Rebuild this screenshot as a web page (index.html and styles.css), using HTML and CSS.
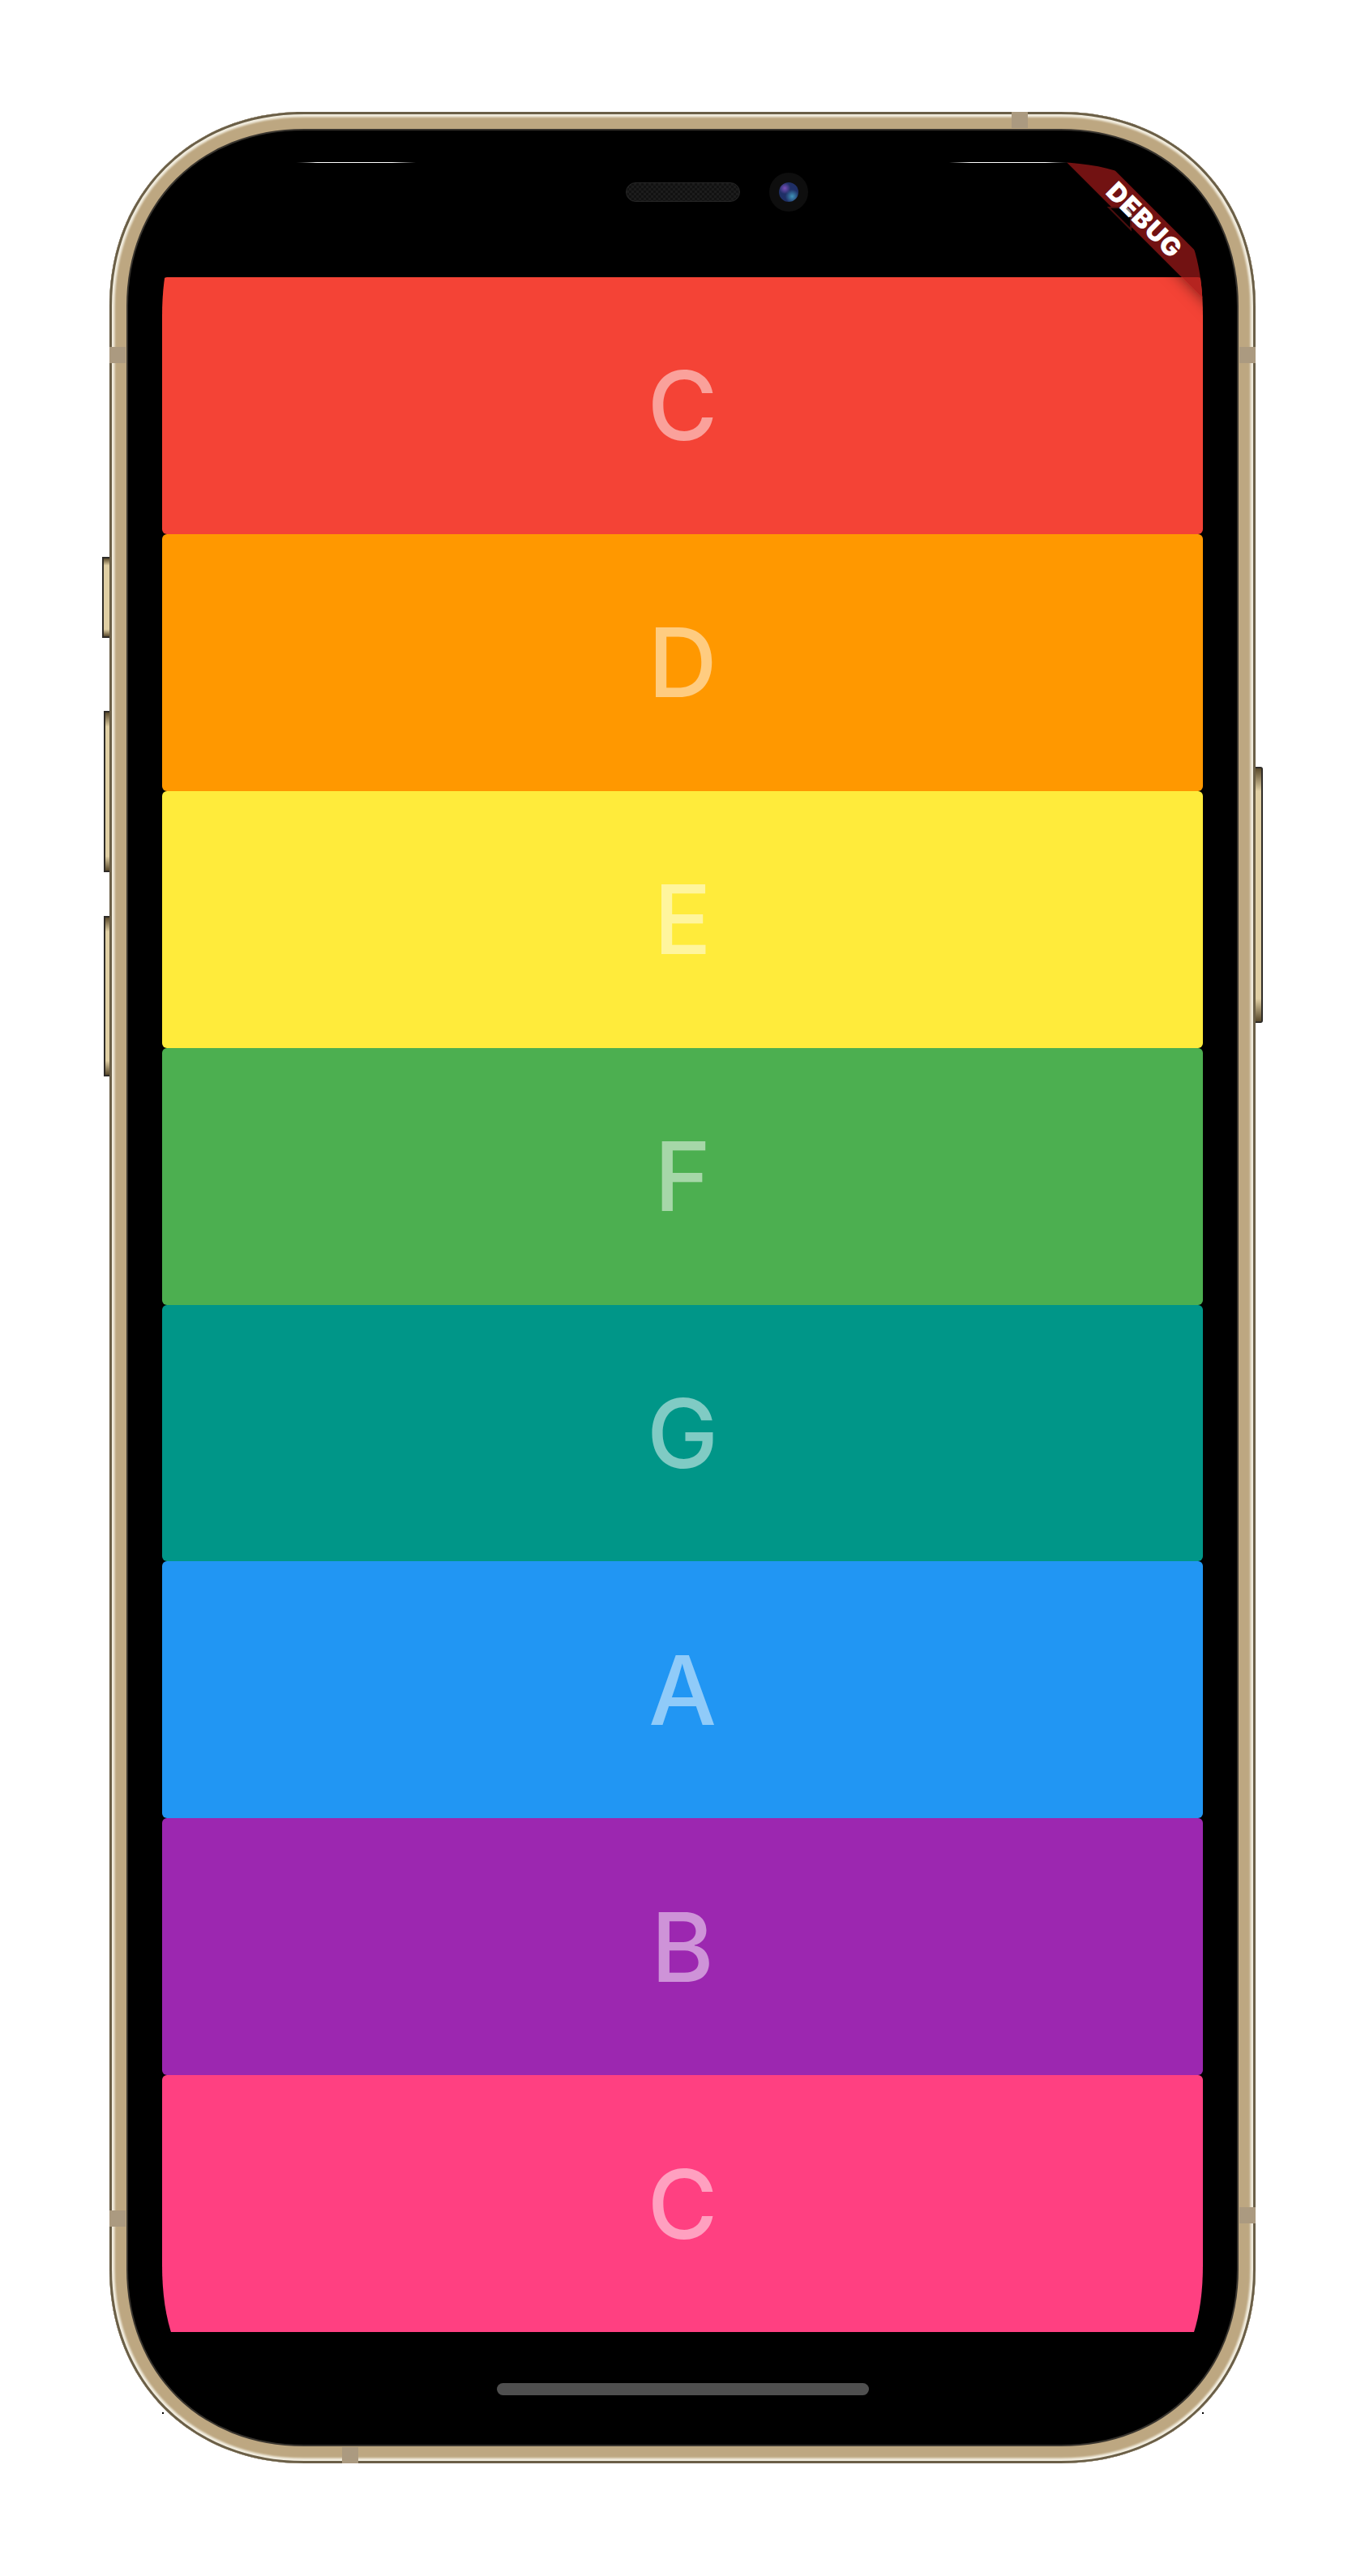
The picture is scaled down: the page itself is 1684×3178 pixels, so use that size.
FILE: index.html
```html
<!DOCTYPE html>
<html>
<head>
<meta charset="utf-8">
<title>Reorderable list</title>
<link rel="stylesheet" href="styles.css">
</head>
<body>
<div class="phone">
	<!-- body: same outline stroked several times, clipped to itself -->
	<svg class="shell" width="1414" height="2901" viewBox="0 0 1414 2901">
		<defs>
			<path id="outline" d="M240 0H1174C1314 0 1414 100 1414 240V2661C1414 2801 1314 2901 1174 2901H240C100 2901 0 2801 0 2661V240C0 100 100 0 240 0Z"/>
			<clipPath id="inside"><use href="#outline"/></clipPath>
			<filter id="soft"><feGaussianBlur stdDeviation="1"/></filter>
		</defs>
		<g clip-path="url(#inside)" fill="none">
			<use href="#outline" fill="#000"/>
			<use href="#outline" stroke="#38342e" stroke-width="46"/>
			<use href="#outline" stroke="#bda781" stroke-width="42"/>
			<use href="#outline" stroke="#f1ecde" stroke-width="13" filter="url(#soft)"/>
			<use href="#outline" stroke="#6b5f47" stroke-width="6"/>
		</g>
		<rect x="65" y="2838" width="2" height="2"/>
		<rect x="1348" y="2838" width="2" height="2"/>
	</svg>
	<!-- side buttons -->
	<div class="btn btn-mute"></div>
	<div class="btn btn-up"></div>
	<div class="btn btn-down"></div>
	<div class="btn btn-power"></div>
	<!-- antenna bands -->
	<div class="band band-top"></div>
	<div class="band band-bottom"></div>
	<div class="band band-lt"></div>
	<div class="band band-lb"></div>
	<div class="band band-rt"></div>
	<div class="band band-rb"></div>
	<div class="bezel">
		<div class="screen">
			<div class="status">
				<div class="glint glint-l"></div>
				<div class="glint glint-r"></div>
				<div class="speaker"></div>
				<div class="camera"><div class="lens"></div></div>
			</div>
			<div class="list">
				<div class="row red">C</div>
				<div class="row orange">D</div>
				<div class="row yellow">E</div>
				<div class="row green">F</div>
				<div class="row teal">G</div>
				<div class="row blue">A</div>
				<div class="row purple">B</div>
				<div class="row pink">C</div>
			</div>
			<div class="footer"><div class="home"></div></div>
			<div class="ribbon"></div>
			<svg class="ribbon-nick" width="40" height="40" viewBox="0 0 40 40">
				<path d="M3 6H21Q30 8 30 18V33Z" fill="#000" stroke="#4a0e0e" stroke-width="2"/>
				<path d="M21 6Q30 8 30 18" fill="none" stroke="#8c8c8c" stroke-width="3"/>
			</svg>
			<div class="ribbon ribbon-text">DEBUG</div>
		</div>
	</div>
</div>
</body>
</html>
```

FILE: styles.css
```css
*{margin:0;padding:0;box-sizing:border-box;}
body{background:#fff;height:3178px;padding-top:138px;display:flex;justify-content:center;overflow:hidden;}

/* frame */
.phone{position:relative;width:1414px;height:2901px;padding:21px 21px 20px 22px;}
.shell{position:absolute;left:0;top:0;}
.bezel{position:relative;height:100%;padding:41px 44px 35px 43px;}

/* buttons */
.btn{position:absolute;width:9px;border:2px solid #2f2c28;background:linear-gradient(to bottom,#5a4a2c 0,#e0cfa4 9%,#e0cfa4 91%,#5a4a2c 100%);}
.btn-mute{left:-9px;top:549px;height:100px;width:9px;border-right:0;}
.btn-up{left:-7px;top:739px;height:199px;width:7px;border-right:0;}
.btn-down{left:-7px;top:992px;height:198px;width:7px;border-right:0;}
.btn-power{right:-9px;top:808px;height:316px;border-left:0;border-radius:0 3px 3px 0;}

/* antenna */
.band{position:absolute;background:#ab9a80;}
.band-top{left:1113px;top:0;width:20px;height:20px;}
.band-bottom{left:287px;bottom:0;width:20px;height:20px;}
.band-lt{left:0;top:290px;width:20px;height:20px;}
.band-lb{left:0;top:2589px;width:20px;height:20px;}
.band-rt{right:0;top:290px;width:20px;height:20px;}
.band-rb{right:0;top:2585px;width:20px;height:20px;}

/* display */
.screen{position:relative;height:100%;display:flex;flex-direction:column;overflow:hidden;background:#000;clip-path:path("M190 0H1094C1224 0 1284 60 1284 190V2594C1284 2724 1224 2784 1094 2784H190C60 2784 0 2724 0 2594V190C0 60 60 0 190 0Z");}
.status{position:relative;height:142px;flex:none;display:flex;justify-content:center;align-items:flex-start;gap:36px;padding:13px 0 0 84px;}
.glint{position:absolute;top:0;height:1px;width:148px;background:linear-gradient(to right,transparent,#fff 18%,#fff 80%,transparent);}
.glint-l{left:165px;}
.glint-r{left:971px;}
.speaker{width:141px;height:24px;margin-top:12px;border:1px solid #262626;border-radius:12px;background:conic-gradient(#1c1c1c 25%,#121212 0 50%,#1c1c1c 0 75%,#121212 0) 0 0/6px 6px;}
.camera{width:48px;height:48px;border-radius:50%;background:#0e0e0e;display:flex;align-items:center;justify-content:center;}
.lens{width:24px;height:24px;border-radius:50%;background:radial-gradient(circle at 30% 30%,#7a4fb8 0,transparent 30%),radial-gradient(circle at 68% 72%,#3f93b8 0,transparent 36%),#1f2f66;}

/* list */
.list{flex:1;display:flex;flex-direction:column;}
.row{flex:1;display:flex;align-items:center;justify-content:center;border-radius:6px;font-family:Inter,"Liberation Sans",sans-serif;font-weight:500;font-size:118px;color:rgba(255,255,255,.5);}
.red{background:#f44336;}
.orange{background:#ff9800;}
.yellow{background:#ffeb3b;}
.green{background:#4caf50;}
.teal{background:#009688;}
.blue{background:#2196f3;}
.purple{background:#9c27b0;}
.pink{background:#ff4081;}

.footer{height:107px;flex:none;display:flex;justify-content:center;padding-top:63px;}
.home{width:459px;height:15px;border-radius:8px;background:#4f4f4f;}

/* debug banner */
.ribbon{position:absolute;left:1012px;top:54px;width:400px;height:35px;transform:rotate(45deg);background:rgba(157,25,25,.725);box-shadow:0 0 18px rgba(0,0,0,.5);}
.ribbon-nick{position:absolute;left:1165px;top:50px;}
.ribbon-text{background:none;box-shadow:none;line-height:35px;text-align:center;letter-spacing:1px;color:#fff;font-family:Inter,"Liberation Sans",sans-serif;font-weight:900;font-size:32px;}
```
